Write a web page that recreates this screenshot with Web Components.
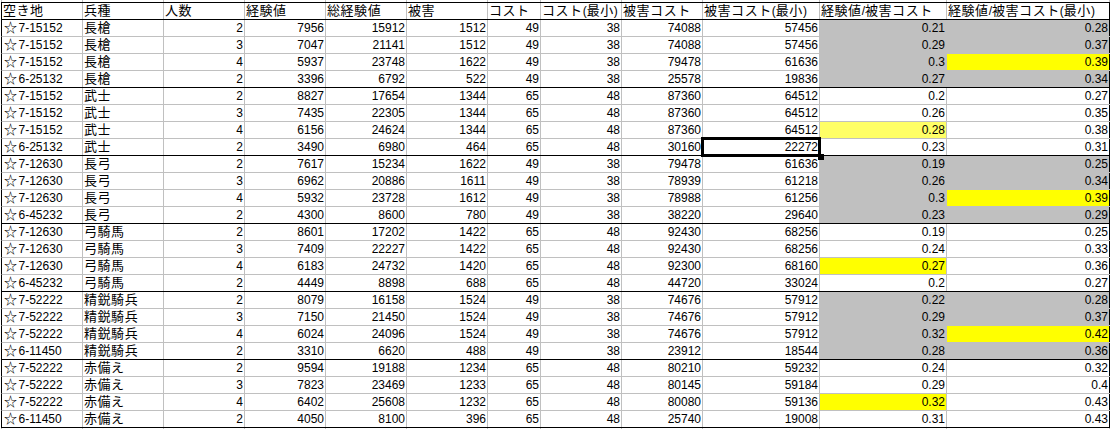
<!DOCTYPE html>
<html><head><meta charset="utf-8"><style>
html,body{margin:0;background:#fff}
body{overflow:hidden;height:429px}
</style></head><body>
<x-sheet></x-sheet>
<script>
const COLS=[81,81,81,81,81,81,53,81,81,117,127,163];
class XCell extends HTMLElement{
  constructor(){super();this.attachShadow({mode:'open'}).innerHTML=`<style>
  :host{display:block;box-sizing:border-box;height:100%;min-width:0;border-right:1px solid #c0c0c0;padding:0 1px 0 1px;white-space:nowrap;position:relative;line-height:16px;font-size:12px;color:#000;background:var(--bg,transparent)}
  :host([num]){text-align:right}
  :host(:last-child){border-right-color:var(--edge,#000)}
  :host([sel])::after{content:"";position:absolute;left:-2px;top:-2px;width:120px;height:20px;border:3px solid #000;box-sizing:border-box;z-index:2;pointer-events:none}
  :host([sel])::before{content:"";position:absolute;left:115px;top:15px;width:6px;height:6px;background:#000;z-index:3}
  </style><slot></slot>`;
  }
}
class XRow extends HTMLElement{
  constructor(){super();this.attachShadow({mode:'open'}).innerHTML=`<style>
  :host{display:grid;width:1109px;height:17px;margin-left:1px;box-sizing:border-box;border-left:1px solid #000;border-bottom:1px solid #c0c0c0;grid-template-columns:var(--cols)}
  :host([end]){border-bottom-color:#000}
  :host([head]){height:18px;border-top:1px solid #000}
  :host([stub]){height:var(--h,2px);border-bottom:0;border-left-color:#c0c0c0;--edge:#c0c0c0}
  </style><slot></slot>`;
  }
}
class XSheet extends HTMLElement{
  constructor(){super();
    const s=this.attachShadow({mode:'open'});
    s.innerHTML=`<style>
    :host{display:block;width:1112px;font-family:"Liberation Sans","Noto Sans CJK JP",sans-serif;--cols:${COLS.map(c=>c+'px').join(' ')}}
    .jp{font-family:"Noto Sans CJK JP",sans-serif;font-size:13px;letter-spacing:.55px;line-height:1}
    .star{margin-left:1px;letter-spacing:1.5px}
    </style>`;
    const fill=(c,t)=>{
      t.split(/([☆\u3040-\u9fff]+)/).forEach((part,i)=>{
        if(!part)return;
        if(i%2){const sp=document.createElement('span');sp.className=part==='☆'?'jp star':'jp';sp.textContent=part;c.append(sp)}
        else c.append(part);
      });
    };
    const stub=h=>{
      const r=document.createElement('x-row');r.setAttribute('stub','');r.style.setProperty('--h',h+'px');
      COLS.forEach(()=>r.append(document.createElement('x-cell')));
      s.append(r);
    };
    stub(2);
    const head=['空き地','兵種','人数','経験値','総経験値','被害','コスト','コスト(最小)','被害コスト','被害コスト(最小)','経験値/被害コスト','経験値/被害コスト(最小)'];
    const hr=document.createElement('x-row');hr.setAttribute('end','');hr.setAttribute('head','');
    head.forEach(t=>{const c=document.createElement('x-cell');fill(c,t);hr.append(c)});
    s.append(hr);
    const D=`☆7-15152,長槍,2,7956,15912,1512,49,38,74088,57456,0.21,0.28,g,g
☆7-15152,長槍,3,7047,21141,1512,49,38,74088,57456,0.29,0.37,g,g
☆7-15152,長槍,4,5937,23748,1622,49,38,79478,61636,0.3,0.39,g,y
☆6-25132,長槍,2,3396,6792,522,49,38,25578,19836,0.27,0.34,g,g
☆7-15152,武士,2,8827,17654,1344,65,48,87360,64512,0.2,0.27,,
☆7-15152,武士,3,7435,22305,1344,65,48,87360,64512,0.26,0.35,,
☆7-15152,武士,4,6156,24624,1344,65,48,87360,64512,0.28,0.38,l,
☆6-25132,武士,2,3490,6980,464,65,48,30160,22272,0.23,0.31,,
☆7-12630,長弓,2,7617,15234,1622,49,38,79478,61636,0.19,0.25,g,g
☆7-12630,長弓,3,6962,20886,1611,49,38,78939,61218,0.26,0.34,g,g
☆7-12630,長弓,4,5932,23728,1612,49,38,78988,61256,0.3,0.39,g,y
☆6-45232,長弓,2,4300,8600,780,49,38,38220,29640,0.23,0.29,g,g
☆7-12630,弓騎馬,2,8601,17202,1422,65,48,92430,68256,0.19,0.25,,
☆7-12630,弓騎馬,3,7409,22227,1422,65,48,92430,68256,0.24,0.33,,
☆7-12630,弓騎馬,4,6183,24732,1420,65,48,92300,68160,0.27,0.36,y,
☆6-45232,弓騎馬,2,4449,8898,688,65,48,44720,33024,0.2,0.27,,
☆7-52222,精鋭騎兵,2,8079,16158,1524,49,38,74676,57912,0.22,0.28,g,g
☆7-52222,精鋭騎兵,3,7150,21450,1524,49,38,74676,57912,0.29,0.37,g,g
☆7-52222,精鋭騎兵,4,6024,24096,1524,49,38,74676,57912,0.32,0.42,g,y
☆6-11450,精鋭騎兵,2,3310,6620,488,49,38,23912,18544,0.28,0.36,g,g
☆7-52222,赤備え,2,9594,19188,1234,65,48,80210,59232,0.24,0.32,,
☆7-52222,赤備え,3,7823,23469,1233,65,48,80145,59184,0.29,0.4,,
☆7-52222,赤備え,4,6402,25608,1232,65,48,80080,59136,0.32,0.43,y,
☆6-11450,赤備え,2,4050,8100,396,65,48,25740,19008,0.31,0.43,,`.split('\n');
    const bg={g:'#c0c0c0',y:'#ffff00',l:'#ffff66'};
    D.forEach((l,i)=>{
      const p=l.split(',');const r=document.createElement('x-row');
      if(i%4==3)r.setAttribute('end','');
      p.slice(0,12).forEach((t,j)=>{
        const c=document.createElement('x-cell');fill(c,t);
        if(j>1)c.setAttribute('num','');
        if(j>=10){const f=p[j+2];if(f)c.style.setProperty('--bg',bg[f])}
        if(i==7&&j==9)c.setAttribute('sel','');
        r.append(c);
      });
      s.append(r);
    });
    stub(1);
  }
}
customElements.define('x-cell',XCell);
customElements.define('x-row',XRow);
customElements.define('x-sheet',XSheet);
</script>
</body></html>
